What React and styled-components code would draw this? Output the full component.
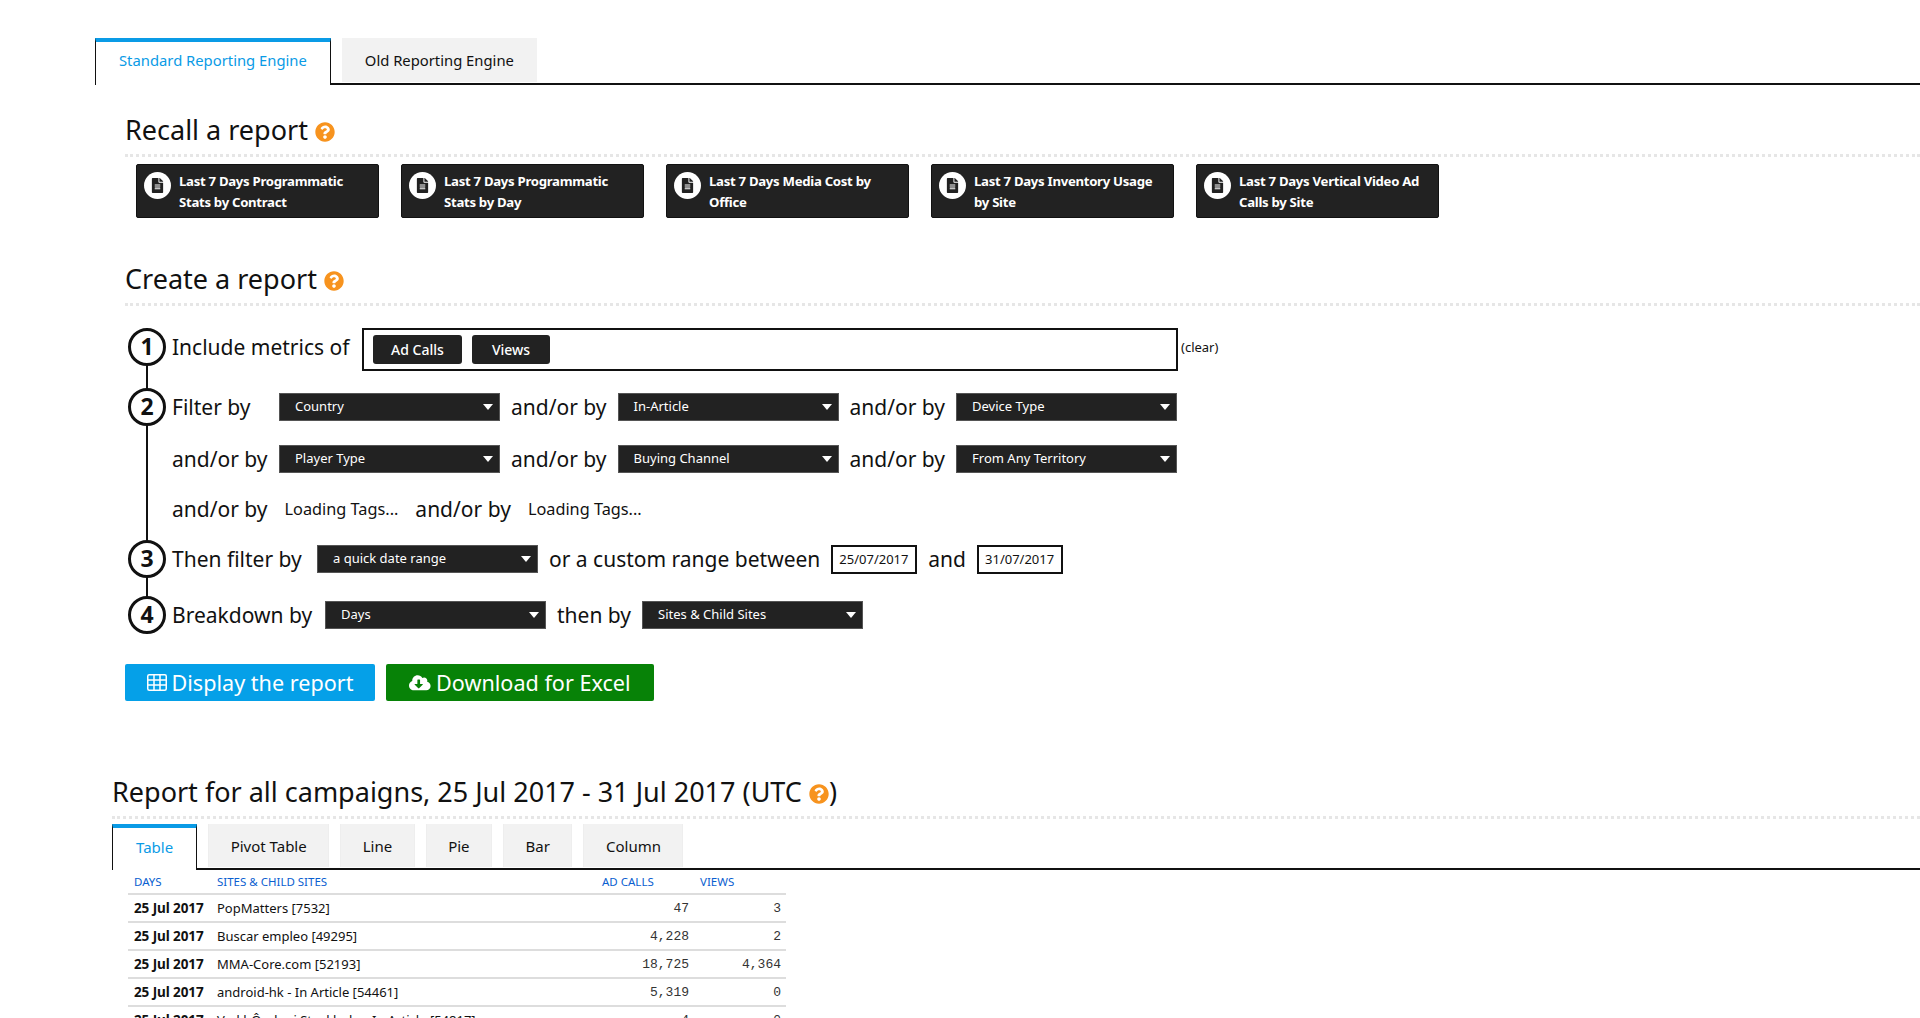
import React from 'react';
import styled, { createGlobalStyle } from 'styled-components';
import { FaQuestionCircle, FaFileAlt, FaCloudDownloadAlt } from 'react-icons/fa';

const GlobalStyle = createGlobalStyle`
  html, body {
    margin: 0;
    padding: 0;
    height: 1018px;
    overflow: hidden;
    background: #fff;
  }
  body {
    font-family: "Noto Sans", "Open Sans", sans-serif;
    color: #111;
  }
`;

const savedReports = [
  ['Last 7 Days Programmatic', 'Stats by Contract'],
  ['Last 7 Days Programmatic', 'Stats by Day'],
  ['Last 7 Days Media Cost by', 'Office'],
  ['Last 7 Days Inventory Usage', 'by Site'],
  ['Last 7 Days Vertical Video Ad', 'Calls by Site'],
];

const rows = [
  ['25 Jul 2017', 'PopMatters [7532]', '47', '3'],
  ['25 Jul 2017', 'Buscar empleo [49295]', '4,228', '2'],
  ['25 Jul 2017', 'MMA-Core.com [52193]', '18,725', '4,364'],
  ['25 Jul 2017', 'android-hk - In Article [54461]', '5,319', '0'],
  ['25 Jul 2017', 'Vad hÔndar i Stockholm- In Article [54817]', '4', '0'],
];

const TableIcon = () => (
  <svg width="20" height="17" viewBox="0 0 20 17" fill="none" stroke="currentColor" strokeWidth="1.5">
    <rect x="0.75" y="0.75" width="18.5" height="15.5" rx="1.5" />
    <path d="M7 1v15M13 1v15M1 6h18M1 11h18" />
  </svg>
);

const App = () => {
  return (
    <Page>
      <GlobalStyle />
      <Tabs>
        <Tab $active>Standard Reporting Engine</Tab>
        <Tab>Old Reporting Engine</Tab>
      </Tabs>

      <Section>
        <Heading>Recall a report <Help /></Heading>
        <Saved>
          {savedReports.map((r) => (
            <SavedButton key={r[0] + r[1]}>
              <DocBadge><FaFileAlt /></DocBadge>
              <span>{r[0]}<br />{r[1]}</span>
            </SavedButton>
          ))}
        </Saved>

        <CreateHeading>Create a report <Help /></CreateHeading>
        <Steps>
          <MetricRow>
            <Num>1</Num>
            <FixedLabel $w={179}>Include metrics of</FixedLabel>
            <MetricBox>
              <Chip $w={89}>Ad Calls</Chip>
              <Chip $w={78}>Views</Chip>
            </MetricBox>
            <Clear>(clear)</Clear>
          </MetricRow>
          <Row $h={52}>
            <Num>2</Num>
            <FixedLabel $w={96}>Filter by</FixedLabel>
            <Select>Country</Select>
            <Label>and/or by</Label>
            <Select>In-Article</Select>
            <Label>and/or by</Label>
            <Select>Device Type</Select>
          </Row>
          <Row $h={52}>
            <Spacer />
            <FixedLabel $w={96}>and/or by</FixedLabel>
            <Select>Player Type</Select>
            <Label>and/or by</Label>
            <Select>Buying Channel</Select>
            <Label>and/or by</Label>
            <Select>From Any Territory</Select>
          </Row>
          <Row $h={47}>
            <Spacer />
            <Label>and/or by</Label>
            <Loading>Loading Tags...</Loading>
            <Label>and/or by</Label>
            <Loading>Loading Tags...</Loading>
          </Row>
          <Row $h={54}>
            <Num>3</Num>
            <FixedLabel $w={134}>Then filter by</FixedLabel>
            <Select>a quick date range</Select>
            <Label>or a custom range between</Label>
            <DateInput>25/07/2017</DateInput>
            <Label>and</Label>
            <DateInput>31/07/2017</DateInput>
          </Row>
          <Row $h={58}>
            <Num>4</Num>
            <FixedLabel $w={142}>Breakdown by</FixedLabel>
            <Select>Days</Select>
            <Label>then by</Label>
            <Select>Sites &amp; Child Sites</Select>
          </Row>
        </Steps>
        <Actions>
          <ActionButton $bg="#05a0e8" $w={250}><TableIcon /> Display the report</ActionButton>
          <ActionButton $bg="#078207" $w={268}><FaCloudDownloadAlt /> Download for Excel</ActionButton>
        </Actions>
      </Section>

      <Report>
        <ReportHeading>Report for all campaigns, 25 Jul 2017 - 31 Jul 2017 (UTC <Help />)</ReportHeading>
        <ReportTabs>
          <ReportTab $active>Table</ReportTab>
          <ReportTab>Pivot Table</ReportTab>
          <ReportTab>Line</ReportTab>
          <ReportTab>Pie</ReportTab>
          <ReportTab>Bar</ReportTab>
          <ReportTab>Column</ReportTab>
        </ReportTabs>
        <Table>
          <thead>
            <tr>
              <Th $w={83}>DAYS</Th>
              <Th $w={385}>SITES &amp; CHILD SITES</Th>
              <Th $w={98}>AD CALLS</Th>
              <Th $w={92}>VIEWS</Th>
            </tr>
          </thead>
          <tbody>
            {rows.map((r) => (
              <tr key={r[1]}>
                <DayCell>{r[0]}</DayCell>
                <Td>{r[1]}</Td>
                <NumCell>{r[2]}</NumCell>
                <NumCell>{r[3]}</NumCell>
              </tr>
            ))}
          </tbody>
        </Table>
      </Report>
    </Page>
  );
};

const Help = () => <HelpIcon><FaQuestionCircle /></HelpIcon>;

const Page = styled.div`
  height: 1018px;
  overflow: hidden;
  padding-top: 38px;
  box-sizing: border-box;
`;

const Tabs = styled.div`
  display: flex;
  gap: 11px;
  margin-left: 95px;
  height: 45px;
  border-bottom: 2px solid #111;
`;

const Tab = styled.div`
  box-sizing: border-box;
  height: ${(p) => (p.$active ? '47px' : '44px')};
  padding: 0 23px;
  padding-bottom: ${(p) => (p.$active ? '7px' : '0')};
  display: flex;
  align-items: center;
  font-size: 14.8px;
  background: ${(p) => (p.$active ? '#fff' : '#f2f2f2')};
  color: ${(p) => (p.$active ? '#0a9be6' : '#111')};
  border-top: ${(p) => (p.$active ? '4px solid #0a9be6' : 'none')};
  border-left: ${(p) => (p.$active ? '1px solid #111' : 'none')};
  border-right: ${(p) => (p.$active ? '1px solid #111' : 'none')};
`;

const Section = styled.div`
  margin-left: 125px;
`;

const Heading = styled.h2`
  margin: 28px 0 0;
  padding-bottom: 8px;
  height: 33px;
  line-height: 33px;
  font-size: 27px;
  font-weight: 400;
  color: #111;
  border-bottom: 3px dotted #e6e6e6;
`;

const CreateHeading = styled(Heading)`
  margin-top: 44px;
`;

const HelpIcon = styled.span`
  color: #f7931e;
  font-size: 20px;
  vertical-align: -2px;
`;

const Saved = styled.div`
  display: flex;
  gap: 22px;
  margin: 7px 0 0 11px;
`;

const SavedButton = styled.div`
  box-sizing: border-box;
  width: 243px;
  height: 54px;
  padding: 6px 7px;
  display: flex;
  gap: 8px;
  background: #222;
  border: 1px solid #111;
  border-radius: 2px;
  color: #fff;
  font-size: 13.2px;
  font-weight: 700;
  line-height: 21px;
  letter-spacing: -0.3px;
`;

const DocBadge = styled.span`
  flex: none;
  width: 27px;
  height: 27px;
  margin-top: 1px;
  border-radius: 50%;
  background: #fff;
  color: #222;
  font-size: 15px;
  display: flex;
  align-items: center;
  justify-content: center;
`;

const Steps = styled.div`
  position: relative;
  margin-top: 18px;

  &::before {
    content: '';
    position: absolute;
    left: 21px;
    top: 20px;
    bottom: 40px;
    width: 2px;
    background: #111;
  }
`;

const Row = styled.div`
  display: flex;
  align-items: center;
  height: ${(p) => p.$h}px;
  gap: 11px;
`;

const MetricRow = styled(Row)`
  height: 46px;
  margin-bottom: 11px;
`;

const Num = styled.div`
  position: relative;
  z-index: 1;
  flex: none;
  box-sizing: border-box;
  width: 38px;
  height: 38px;
  margin: 0 -5px 0 3px;
  padding-bottom: 2px;
  border: 3px solid #111;
  border-radius: 50%;
  background: #fff;
  display: flex;
  align-items: center;
  justify-content: center;
  font-size: 23px;
  font-weight: 700;
`;

const Spacer = styled.div`
  flex: none;
  width: 36px;
`;

const Label = styled.span`
  font-size: 21px;
  white-space: nowrap;
`;

const FixedLabel = styled(Label)`
  flex: none;
  width: ${(p) => p.$w}px;
`;

const MetricBox = styled.div`
  box-sizing: border-box;
  width: 816px;
  height: 43px;
  margin-top: 4px;
  padding: 0 9px;
  display: flex;
  align-items: center;
  gap: 10px;
  border: 2px solid #111;
`;

const Chip = styled.div`
  width: ${(p) => p.$w}px;
  height: 29px;
  line-height: 29px;
  text-align: center;
  background: #222;
  color: #fff;
  font-size: 14px;
  font-weight: 500;
  border-radius: 3px;
`;

const Clear = styled.span`
  margin-left: -8px;
  font-size: 13px;
`;

const Select = styled.div`
  position: relative;
  box-sizing: border-box;
  flex: none;
  width: 221px;
  height: 28px;
  padding-left: 15px;
  line-height: 25px;
  background: #222;
  color: #fff;
  font-size: 13px;
  border: 1px solid #555;

  &::after {
    content: '';
    position: absolute;
    right: 6px;
    top: 10px;
    border-left: 5px solid transparent;
    border-right: 5px solid transparent;
    border-top: 6px solid #fff;
  }
`;

const Loading = styled.span`
  font-size: 16.3px;
  margin: 0 6px;
`;

const DateInput = styled.div`
  box-sizing: border-box;
  width: 86px;
  height: 29px;
  line-height: 25px;
  padding-left: 6px;
  font-size: 13px;
  border: 2px solid #111;
`;

const Actions = styled.div`
  display: flex;
  gap: 11px;
  margin-top: 20px;
`;

const ActionButton = styled.div`
  box-sizing: border-box;
  display: flex;
  align-items: center;
  justify-content: center;
  gap: 5px;
  height: 37px;
  width: ${(p) => p.$w}px;
  background: ${(p) => p.$bg};
  color: #fff;
  font-size: 21.6px;
  border-radius: 2px;

  svg:not([width]) {
    font-size: 26px;
  }
`;

const Report = styled.div`
  margin-left: 112px;
`;

const ReportHeading = styled(Heading)`
  margin-top: 74px;
`;

const ReportTabs = styled.div`
  display: flex;
  gap: 11px;
  margin-top: 5px;
  height: 44px;
  border-bottom: 2px solid #111;
`;

const ReportTab = styled(Tab)`
  height: ${(p) => (p.$active ? '46px' : '43px')};
  padding: 0 ${(p) => (p.$active ? '23px' : '21.5px')};
  padding-bottom: ${(p) => (p.$active ? '5px' : '0')};
  font-size: 15px;
  border-left: ${(p) => (p.$active ? '1px solid #111' : '1px solid #eee')};
  border-right: ${(p) => (p.$active ? '1px solid #111' : '1px solid #eee')};
`;

const Table = styled.table`
  margin-left: 16px;
  width: 658px;
  border-collapse: collapse;
  table-layout: fixed;
`;

const Th = styled.th`
  box-sizing: border-box;
  width: ${(p) => p.$w}px;
  height: 24px;
  padding: 0 5px 0 6px;
  text-align: left;
  font-size: 11.5px;
  font-weight: 400;
  color: #0a60d0;
  border-bottom: 2px solid #ddd;
`;

const Td = styled.td`
  height: 26px;
  padding: 0 5px 0 6px;
  font-size: 13px;
  white-space: nowrap;
  border-bottom: 2px solid #ddd;
`;

const DayCell = styled(Td)`
  font-weight: 700;
  font-size: 13.5px;
  letter-spacing: -0.1px;
`;

const NumCell = styled(Td)`
  text-align: right;
  font-family: "Liberation Mono", monospace;
  font-size: 13px;
  color: #333;
`;

export default App;
